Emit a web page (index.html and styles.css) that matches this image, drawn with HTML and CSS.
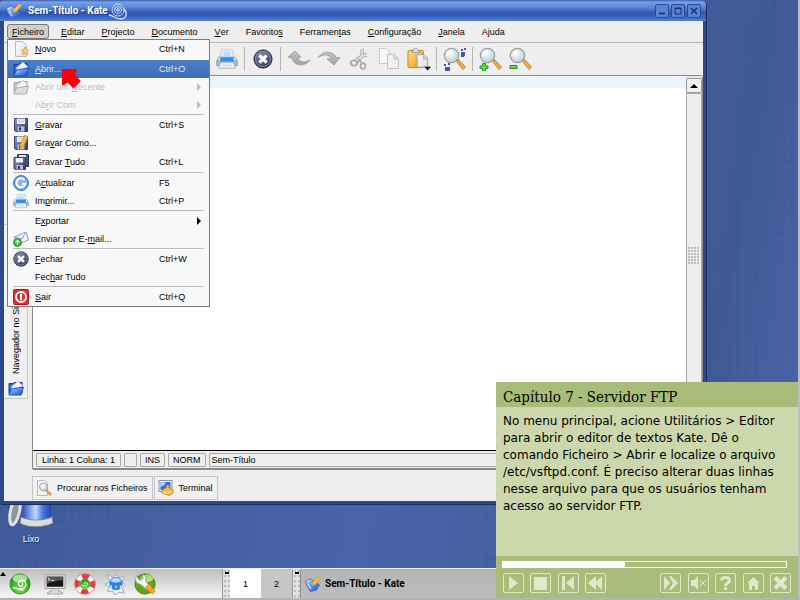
FILE: index.html
```html
<!DOCTYPE html>
<html lang="pt">
<head>
<meta charset="utf-8">
<title>Sem-Título - Kate</title>
<link rel="stylesheet" href="styles.css">
</head>
<body>
<svg class="defs" aria-hidden="true">
  <defs>
    <linearGradient id="g-blue" x1="0" y1="0" x2="1" y2="1"><stop offset="0" stop-color="#cfe4ff"/><stop offset=".5" stop-color="#5b93ee"/><stop offset="1" stop-color="#1546c8"/></linearGradient>
    <linearGradient id="g-paper" x1="0" y1="0" x2="1" y2="1"><stop offset="0" stop-color="#fff"/><stop offset="1" stop-color="#d9dce8"/></linearGradient>
    <linearGradient id="g-grey" x1="0" y1="0" x2="0" y2="1"><stop offset="0" stop-color="#c4c4c4"/><stop offset="1" stop-color="#a2a2a2"/></linearGradient>
    <linearGradient id="g-gold" x1="0" y1="0" x2="1" y2="1"><stop offset="0" stop-color="#ffe08a"/><stop offset="1" stop-color="#e2960d"/></linearGradient>
    <linearGradient id="g-disk" x1="0" y1="0" x2="1" y2="1"><stop offset="0" stop-color="#9aa0c4"/><stop offset="1" stop-color="#2a2e5e"/></linearGradient>
    <linearGradient id="g-bin" x1="0" y1="0" x2="1" y2="0"><stop offset="0" stop-color="#2b57cf"/><stop offset=".45" stop-color="#c6d6fa"/><stop offset=".7" stop-color="#4f79e0"/><stop offset="1" stop-color="#1f46b8"/></linearGradient>
    <radialGradient id="g-lens" cx=".4" cy=".35" r=".7"><stop offset="0" stop-color="#fff"/><stop offset="1" stop-color="#b9c9c9"/></radialGradient>
    <radialGradient id="g-navy" cx=".4" cy=".3" r=".8"><stop offset="0" stop-color="#8588ad"/><stop offset="1" stop-color="#262a52"/></radialGradient>
    <radialGradient id="g-green" cx=".5" cy=".75" r=".7"><stop offset="0" stop-color="#7be04c"/><stop offset="1" stop-color="#18951a"/></radialGradient>

    <symbol id="i-kate" viewBox="0 0 16 16"><path d="M.5 5.500 5 2.500 14.500 9l-3 5-6 1.500-4-6z" fill="url(#g-blue)" stroke="#3b61c0" stroke-width=".8"/><path d="m2 6 2-1.500M3 8l3 5" stroke="#e6efff"/><path d="M13.500.5 8 6 7 9.500l3.500-1 5-6z" fill="#f6c44e" stroke="#d28a1d" stroke-width=".7"/></symbol>
    <symbol id="i-new" viewBox="0 0 16 16"><path d="M2.500 .5h7l4 4v11h-11z" fill="url(#g-paper)" stroke="#b4b7c4"/><path d="m12 6 1 2.500 2.500.5-1.500 2 .500 2.500-2.500-1-2.500 1 .5-2.500-1.500-2 2.500-.5z" fill="#ffd06a" stroke="#e59a2c" stroke-width=".8"/></symbol>
    <symbol id="i-open" viewBox="0 0 16 16"><path d="M1 3.500h4l1-1h8v11H1z" fill="#2c62dc" stroke="#163f9f"/><path d="m3 7 7-6 5 5-10 5z" fill="#f1f4ff" stroke="#9fb1dd" stroke-width=".7"/><path d="M.8 15 3.500 9l12-2-2.500 8z" fill="url(#g-blue)" stroke="#174bc4" stroke-width=".9"/></symbol>
    <symbol id="i-open-off" viewBox="0 0 16 16"><path d="M1 3.500h4l1-1h8v11H1z" fill="#c0c0c0" stroke="#aaa"/><path d="m3 7 7-6 5 5-10 5z" fill="#f1f1f1" stroke="#bbb" stroke-width=".7"/><path d="M.8 15 3.500 9l12-2-2.500 8z" fill="#ddd" stroke="#a8a8a8" stroke-width=".9"/></symbol>
    <symbol id="i-save" viewBox="0 0 16 16"><path d="M1.500 1.500h13v13h-12l-1-1z" fill="url(#g-disk)" stroke="#3c406e"/><path d="M4 1.500h8v5.500H4z" fill="#f1f3fb"/><path d="M5 3h6M5 5h6" stroke="#c2c7da"/><path d="M4.500 9.500h7v5h-7z" fill="#b9bfd8"/><path d="M6 10.500h2v3H6z" fill="#30355f"/></symbol>
    <symbol id="i-saveas" viewBox="0 0 16 16"><use href="#i-save"/><path d="m12 0 3 2-5 10-3 2 0-4z" fill="#f6b93b" stroke="#cf861b" stroke-width=".7"/></symbol>
    <symbol id="i-saveall" viewBox="0 0 16 16"><path d="M4.500.5h11v12h-11z" fill="#4b5083" stroke="#30345f"/><path d="M6 1h7v3H6z" fill="#dde1f1"/><path d="M1 3.500h11.500v12H2l-1-1z" fill="url(#g-disk)" stroke="#3c406e"/><path d="M3 4h7v4.500H3z" fill="#f1f3fb"/><path d="M3.500 11h6.500v4.500H3.500z" fill="#b9bfd8"/><path d="M5 12h2v3H5z" fill="#30355f"/></symbol>
    <symbol id="i-reload" viewBox="0 0 16 16"><circle cx="8" cy="8" r="7.500" fill="#5f95e8" stroke="#3e74d1"/><circle cx="8" cy="8" r="6.200" fill="#8cb7f5"/><path d="M11.500 5A4.500 4.500 0 1 0 12.300 9H9" fill="none" stroke="#fff" stroke-width="2"/></symbol>
    <symbol id="i-print" viewBox="0 0 24 22"><path d="M6 1h12l1 9H5z" fill="#eaf4ff" stroke="#b7c8dc"/><path d="M8 3h8v5H8z" fill="#b9ddfb"/><path d="M3 9h18l2 4v5H1v-5z" fill="#e7e9f1" stroke="#9498aa"/><path d="M5 9h14l1 5H4z" fill="#2c92ec"/><path d="M1 13h4v5H1zm18 0h4v5h-4z" fill="#b4b7c7" stroke="#8a8da0" stroke-width=".6"/><path d="M5 15h14l2 6H3z" fill="#f8faff" stroke="#a8acbd"/><path d="M7 17h10l1 2H6z" fill="#bcdcf8"/></symbol>
    <symbol id="i-close" viewBox="0 0 22 22"><circle cx="11" cy="11" r="10" fill="url(#g-navy)" stroke="#202448"/><circle cx="11" cy="11" r="8.300" fill="none" stroke="#9093b4"/><path d="m7 7 8 8m0-8-8 8" stroke="#fff" stroke-width="3.600"/></symbol>
    <symbol id="i-mail" viewBox="0 0 16 16"><path d="m1 6 12-5 2.500 8L5 13z" fill="#eef0fa" stroke="#9aa0bd"/><path d="m1 6 8 2 4-7" fill="none" stroke="#9aa0bd"/><circle cx="4.500" cy="11.500" r="4" fill="#35b33a" stroke="#1d8624" stroke-width=".7"/><path d="M4.500 14v-4.500M2.500 11.300l2-2 2 2" fill="none" stroke="#fff" stroke-width="1.200"/></symbol>
    <symbol id="i-quit" viewBox="0 0 16 16"><rect x=".5" y=".5" width="15" height="15" rx="1" fill="#d93338" stroke="#b5161c"/><circle cx="8" cy="8" r="5" fill="none" stroke="#fff" stroke-width="1.800"/><path d="M8 5v6" stroke="#fff" stroke-width="2"/></symbol>
    <symbol id="i-undo" viewBox="0 0 24 22"><path d="m1 9 7-6 6 6-3 .500c.5 4 5 6 12 2.500-4 6.500-16 7-18-2z" fill="url(#g-grey)" stroke="#989898" stroke-width=".8"/></symbol>
    <symbol id="i-redo" viewBox="0 0 24 22"><path d="M1 9.500C6 2 17 3 19 9.500h4L17 17l-7-6 4-.500c-1-4-7-5-13-1z" fill="url(#g-grey)" stroke="#989898" stroke-width=".8"/></symbol>
    <symbol id="i-cut" viewBox="0 0 24 24"><path d="M15 2c1 4 0 8-5 13M20 8c-4 0-7 2-11 5" stroke="#a4a4a4" stroke-width="3.400" fill="none"/><path d="M15 2c1 4 0 8-5 13M20 8c-4 0-7 2-11 5" stroke="#e1e1e1" stroke-width="1.800" fill="none"/><path d="m11 12 5 5" stroke="#b0b0b0" stroke-width="2"/><ellipse cx="7" cy="16" rx="3.200" ry="2.600" fill="none" stroke="#ababab" stroke-width="1.800"/><ellipse cx="16" cy="19" rx="2.400" ry="2.800" fill="none" stroke="#ababab" stroke-width="1.800"/></symbol>
    <symbol id="i-copy" viewBox="0 0 24 24"><path d="M2.500 1.500h7l3 3v12h-10z" fill="#f7f7f7" stroke="#cacaca"/><path d="M10.500 7.500h7l4 4v10h-11z" fill="#f1f1f1" stroke="#c2c2c2"/><path d="M17 8v4h4" fill="#ddd" stroke="#c2c2c2"/></symbol>
    <symbol id="i-paste" viewBox="0 0 25 24"><rect x="1" y="3" width="16" height="18" rx="1.500" fill="url(#g-gold)" stroke="#c98512"/><path d="M5 5V3h2c0-3 4-3 4 0h2v2z" fill="#e7e7ee" stroke="#85858f" stroke-width=".8"/><path d="M10.500 7.500h7l4 4v9h-11z" fill="url(#g-paper)" stroke="#9a9db2"/><path d="M17 8v4h4" fill="#ccd" stroke="#9a9db2" stroke-width=".7"/><path d="M18 20h7l-3.500 4z" fill="#000"/></symbol>
    <symbol id="i-lens" viewBox="0 0 24 24"><path d="m13.500 14.500 2-2 7 7.500-2.500 2.500z" fill="#f2a844" stroke="#b87520" stroke-width=".8"/><circle cx="8.500" cy="8.500" r="7.200" fill="url(#g-lens)" stroke="#9aa0a0" stroke-width="1.200"/><path d="M4.500 9a4.500 4.500 0 0 1 4-5" fill="none" stroke="#fff" stroke-width="1.500"/></symbol>
    <symbol id="i-find" viewBox="0 0 24 24"><use href="#i-lens"/><path d="M1 17h2v2H1zm4-1h2v2H5zm-3 4h5v4H2zm16-15h4v3l-1 2h-3zm0-3h2v2h-2zm3-1h2v2h-2z" fill="#3c5a9c"/></symbol>
    <symbol id="i-zoomin" viewBox="0 0 24 24"><use href="#i-lens"/><path d="M3.500 16.500h3v2.500h2.500v2.500H6.500V24h-3v-2.500H1V19h2.500z" fill="#64e23c" stroke="#188a12" stroke-width=".9"/></symbol>
    <symbol id="i-zoomout" viewBox="0 0 24 24"><use href="#i-lens"/><path d="M1 18.500h7v3H1z" fill="#64e23c" stroke="#188a12" stroke-width=".9"/></symbol>
    <symbol id="i-findfile" viewBox="0 0 16 16"><path d="M1.500.5h7l3 3v12h-10z" fill="#f4f4f8" stroke="#b5b8c6"/><path d="m10 10 5 5" stroke="#dd9a3c" stroke-width="2.500"/><circle cx="7.500" cy="7" r="4" fill="url(#g-lens)" stroke="#a4a8ac"/></symbol>
    <symbol id="i-term" viewBox="0 0 16 16"><rect x="1" y=".5" width="13" height="11" fill="#e8edf8" stroke="#8a93b0"/><path d="M2.500 2h10v8h-10z" fill="#2d6ede"/><path d="M2.500 7c4-1 5-3 5-5h-5z" fill="#a9cbff"/><path d="m4 10 4-2 1-3h2v3l4 2v3l-4 2.500L4 13z" fill="#f6bb48" stroke="#c8801b" stroke-width=".8"/><path d="m5 12 4 1.500 5-2" fill="none" stroke="#fff0c0"/></symbol>
  </defs>
</svg>

<main class="desktop">
  <a class="trash" href="#lixo">
    <svg viewBox="0 0 46 32" aria-hidden="true"><path d="M15 0h28v22c-6 4-22 4-28 0z" fill="url(#g-bin)"/><path d="M13 20c8 4 23 4 31 0l1 6c-9 5-26 5-33 0z" fill="#d9dcdc" stroke="#6f7a86" stroke-width=".8"/><ellipse cx="7" cy="14" rx="4.500" ry="14" transform="rotate(12 7 14)" fill="#8b96a0" stroke="#dfe2de" stroke-width="3"/></svg>
    <span>Lixo</span>
  </a>

  <section class="window" aria-label="Sem-Título - Kate">
    <header class="titlebar">
      <svg class="ic16" aria-hidden="true"><use href="#i-kate"/></svg>
      <h1>Sem-Título - Kate</h1>
      <svg class="swirl" viewBox="0 0 22 20" aria-hidden="true"><circle cx="10" cy="9" r="6" fill="none" stroke="#c9d7f2"/><circle cx="10" cy="9" r="3.500" fill="none" stroke="#c9d7f2"/><circle cx="10" cy="9" r="1.300" fill="none" stroke="#e4ecfa"/><path d="M1 14c4 0 6 4 12 4 5 0 7-5 3-10" fill="none" stroke="#dce6f8" stroke-width="1.300"/></svg>
      <div class="winbtns">
        <button type="button" aria-label="Minimizar"><svg viewBox="0 0 12 12"><path d="M3 8.500h6" stroke="#142c66" stroke-width="1.500"/></svg></button>
        <button type="button" aria-label="Maximizar"><svg viewBox="0 0 12 12"><path d="M3 3.500h6v5.500H3zM3 3h6" fill="none" stroke="#142c66"/></svg></button>
        <button type="button" aria-label="Fechar janela"><svg viewBox="0 0 12 12"><path d="m3 3 6 6m0-6L3 9" stroke="#142c66" stroke-width="1.200"/></svg></button>
      </div>
    </header>

    <nav class="menubar" aria-label="Menu">
      <div class="menu">
        <button type="button" class="open" aria-expanded="true"><u>F</u>icheiro</button>
        <div class="popup">
          <button type="button" class="tall first"><svg><use href="#i-new"/></svg><span><u>N</u>ovo</span><kbd>Ctrl+N</kbd></button>
          <button type="button" class="active"><svg><use href="#i-open"/></svg><span><u>A</u>brir...</span><kbd>Ctrl+O</kbd></button>
          <button type="button" disabled><svg><use href="#i-open-off"/></svg><span>Abrir um <u>R</u>ecente</span><i class="more"></i></button>
          <button type="button" disabled><svg></svg><span>Ab<u>r</u>ir Com</span><i class="more"></i></button>
          <hr>
          <button type="button"><svg><use href="#i-save"/></svg><span><u>G</u>ravar</span><kbd>Ctrl+S</kbd></button>
          <button type="button"><svg><use href="#i-saveas"/></svg><span>Gra<u>v</u>ar Como...</span></button>
          <button type="button" class="tall"><svg><use href="#i-saveall"/></svg><span>Gravar <u>T</u>udo</span><kbd>Ctrl+L</kbd></button>
          <hr>
          <button type="button"><svg><use href="#i-reload"/></svg><span>A<u>c</u>tualizar</span><kbd>F5</kbd></button>
          <button type="button"><svg><use href="#i-print"/></svg><span>Im<u>p</u>rimir...</span><kbd>Ctrl+P</kbd></button>
          <hr>
          <button type="button"><svg></svg><span>E<u>x</u>portar</span><i class="more"></i></button>
          <button type="button"><svg><use href="#i-mail"/></svg><span>Enviar por E-<u>m</u>ail...</span></button>
          <hr>
          <button type="button"><svg><use href="#i-close"/></svg><span><u>F</u>echar</span><kbd>Ctrl+W</kbd></button>
          <button type="button"><svg></svg><span>Fec<u>h</u>ar Tudo</span></button>
          <hr>
          <button type="button"><svg><use href="#i-quit"/></svg><span><u>S</u>air</span><kbd>Ctrl+Q</kbd></button>
        </div>
      </div>
      <button type="button"><u>E</u>ditar</button>
      <button type="button"><u>P</u>rojecto</button>
      <button type="button"><u>D</u>ocumento</button>
      <button type="button"><u>V</u>er</button>
      <button type="button">Favorito<u>s</u></button>
      <button type="button">Ferramen<u>t</u>as</button>
      <button type="button"><u>C</u>onfiguração</button>
      <button type="button"><u>J</u>anela</button>
      <button type="button">Ajuda</button>
    </nav>

    <div class="toolbar" role="toolbar" aria-label="Ferramentas">
      <button type="button" aria-label="Imprimir"><svg class="mid"><use href="#i-print"/></svg></button>
      <i class="sep"></i>
      <button type="button" aria-label="Fechar"><svg class="small"><use href="#i-close"/></svg></button>
      <i class="sep"></i>
      <button type="button" aria-label="Desfazer" disabled><svg><use href="#i-undo"/></svg></button>
      <button type="button" aria-label="Refazer" disabled><svg><use href="#i-redo"/></svg></button>
      <button type="button" aria-label="Cortar" disabled><svg><use href="#i-cut"/></svg></button>
      <button type="button" aria-label="Copiar" disabled><svg><use href="#i-copy"/></svg></button>
      <button type="button" aria-label="Colar"><svg><use href="#i-paste"/></svg></button>
      <i class="sep"></i>
      <button type="button" aria-label="Procurar"><svg><use href="#i-find"/></svg></button>
      <i class="sep"></i>
      <button type="button" aria-label="Ampliar"><svg><use href="#i-zoomin"/></svg></button>
      <button type="button" aria-label="Reduzir"><svg><use href="#i-zoomout"/></svg></button>
    </div>

    <div class="work">
      <aside class="side">
        <button type="button" class="vtab"><span>Navegador no Sistema de Ficheiros</span><svg class="ic16"><use href="#i-open"/></svg></button>
      </aside>
      <div class="editor">
        <div class="text">
          <textarea aria-label="Texto do documento" spellcheck="false"></textarea>
          <div class="scroll">
            <button type="button" aria-label="Subir"><svg viewBox="0 0 8 4"><path d="M0 4h8L4 0z"/></svg></button>
            <div class="thumb"><i></i></div>
          </div>
        </div>
        <footer class="status">
          <span class="pos">Linha: 1 Coluna: 1</span><span class="blank"></span><span>INS</span><span>NORM</span><span class="file">Sem-Título</span>
        </footer>
      </div>
    </div>

    <div class="bottomtabs">
      <button type="button"><svg class="ic16"><use href="#i-findfile"/></svg>Procurar nos Ficheiros</button>
      <button type="button"><svg class="ic16"><use href="#i-term"/></svg>Terminal</button>
    </div>
  </section>

  <svg class="pointer" viewBox="0 0 20 20" aria-hidden="true"><path d="M1 1h14.500v2.500L14 6v1l5.500 5.500v1L13 20h-1l-5.500-5.500L3 17H1z" fill="#fb0007"/></svg>

  <nav class="taskbar" aria-label="Painel">
    <i class="tip"></i>
    <div class="launch">
      <button type="button" aria-label="Menu principal"><svg viewBox="0 0 24 24"><circle cx="12" cy="12" r="11" fill="url(#g-green)" stroke="#128016" stroke-width=".8"/><ellipse cx="12" cy="6" rx="8" ry="4.500" fill="#c7f3b8" opacity=".8"/><path d="M4 16c5 1 9 2 13 0 3-3 1-8-3-8s-5 5-2 6 4-2 2-3M8 17l8 2" fill="none" stroke="#fff" stroke-width="1.300"/></svg></button>
      <button type="button" aria-label="Terminal"><svg viewBox="0 0 24 24"><path d="M1 2h22v15H1z" fill="#e4e4e4" stroke="#9a9a9a"/><path d="M3 4h18v11H3z" fill="#151515"/><path d="M3 4h18v4C14 8 9 10 3 12z" fill="#555"/><path d="m4.500 5.500 2 1.500-2 1M8 8h3" fill="none" stroke="#fff"/><path d="M9 17h6l1 3 4 1v2H4v-2l4-1z" fill="#dadada" stroke="#888" stroke-width=".7"/></svg></button>
      <button type="button" aria-label="Ajuda"><svg viewBox="0 0 24 24"><circle cx="12" cy="12" r="8.500" fill="none" stroke="#f5f2f2" stroke-width="5.500"/><circle cx="12" cy="12" r="8.500" fill="none" stroke="#e33d3d" stroke-width="5.500" stroke-dasharray="7.400 5.950" stroke-dashoffset="3.500"/><circle cx="12" cy="12" r="11.300" fill="none" stroke="#c86a6a" stroke-width=".7"/><circle cx="12" cy="12" r="5.500" fill="url(#g-green)"/><path d="M8 13c4 2 7 1 7-1s-4-2-4 0" fill="none" stroke="#dff8d4"/></svg></button>
      <button type="button" aria-label="Navegador"><svg viewBox="0 0 24 24"><path d="m4 1 5 4 4-3 3 3 6-1-2 6 3 3-3 3 2 6-6-1-4 3-2-4-6 0 2-5-5-3 5-2z" fill="#eef3fa" stroke="#8fa0b8" stroke-width=".9"/><circle cx="13" cy="11.500" r="7.200" fill="#2c7de4"/><path d="M7 9c3-5 9-5 12 0-4 2-8 2-12 0z" fill="#b5dbff"/><path d="M8 17v-4m5 4v-3m5 3v-4" stroke="#bfe0ff" stroke-width="1.500"/></svg></button>
      <button type="button" aria-label="Configurar"><svg viewBox="0 0 24 24"><circle cx="12" cy="12" r="11" fill="#5aa71c" stroke="#3f8311"/><ellipse cx="14" cy="6" rx="7" ry="4" fill="#b5dd79"/><path d="M4 2 1 6l2 5 5 2 5 5 4-4-4-5V4L9 1l1 5-3 2-3-2z" fill="#f4f4f4" stroke="#8a8a8a" stroke-width=".8"/><path d="m12 16 5-4 6 8-3 3z" fill="#f9a72c" stroke="#cf7a12" stroke-width=".8"/></svg></button>
    </div>
    <div class="grip"></div>
    <button type="button" class="desk on">1</button>
    <button type="button" class="desk">2</button>
    <div class="grip"></div>
    <button type="button" class="task"><svg class="ic16"><use href="#i-kate"/></svg>Sem-Título - Kate</button>
  </nav>

  <article class="lesson">
    <h2>Capítulo 7 - Servidor FTP</h2>
    <p>No menu principal, acione Utilitários &gt; Editor para abrir o editor de textos Kate. Dê o comando Ficheiro &gt; Abrir e localize o arquivo /etc/vsftpd.conf. É preciso alterar duas linhas nesse arquivo para que os usuários tenham acesso ao servidor FTP.</p>
    <footer>
      <div class="progress"><div class="done" style="width:43%"></div></div>
      <div class="controls">
        <div class="group">
          <button type="button" aria-label="Reproduzir"><svg viewBox="0 0 19 18"><path d="M5 2v14l9-7z"/></svg></button>
          <button type="button" aria-label="Parar"><svg viewBox="0 0 19 18"><path d="M3 3h13v13H3z"/></svg></button>
          <button type="button" aria-label="Início"><svg viewBox="0 0 19 18"><path d="M3 2h3v14H3zM15 2v14L7 9z"/></svg></button>
          <button type="button" aria-label="Recuar"><svg viewBox="0 0 19 18"><path d="M10 2v14L2 9zM16 2v14L9 9z"/></svg></button>
        </div>
        <div class="group wide">
          <button type="button" aria-label="Avançar"><svg viewBox="0 0 19 18"><path d="m3 2 6 7-6 7zM8 2h2l7 7-7 7H8l4-7z"/></svg></button>
          <button type="button" aria-label="Sem som"><svg viewBox="0 0 19 18"><path d="M2 6h3l4-4v14l-4-4H2z"/><path d="m11 6 6 6m0-6-6 6" stroke="#dfe8cb"/></svg></button>
          <button type="button" aria-label="Ajuda da lição"><svg viewBox="0 0 19 18"><path d="M5.500 6.500c0-4 8-4 8 0 0 2.500-4 2.500-4 5.500" fill="none" stroke="#dfe8cb" stroke-width="3"/><path d="M8 13h3v3H8z"/></svg></button>
          <button type="button" aria-label="Página inicial"><svg viewBox="0 0 19 18"><path d="m9.500 3 6.500 6h-2v7h-3v-4H8v4H5V9H3z"/></svg></button>
          <button type="button" aria-label="Sair da lição"><svg viewBox="0 0 19 18"><path d="m4 3.500 11 11m0-11-11 11" stroke="#dfe8cb" stroke-width="4.500"/></svg></button>
        </div>
      </div>
    </footer>
  </article>
</main>
</body>
</html>
```
FILE: styles.css
```css
* { box-sizing: border-box; }

body {
  margin: 0;
  font: 9px/12px "Liberation Sans", sans-serif;
  color: #000;
}

button {
  margin: 0;
  padding: 0;
  border: 0;
  background: none;
  font: inherit;
  color: inherit;
  display: flex;
  align-items: center;
  white-space: nowrap;
}

svg { display: block; flex: none; }
u { text-underline-offset: 1px; }

.defs { position: absolute; width: 0; height: 0; }
.ic16 { width: 16px; height: 16px; }

.desktop {
  position: relative;
  min-height: 100vh;
  overflow: hidden;
  border-right: 2px solid #bdbdc1;
  border-bottom: 2px solid #b4b4b4;
  background:
    radial-gradient(circle, rgba(255, 255, 255, .02) 2px, transparent 3px) 0 0 / 9px 9px,
    linear-gradient(100deg, #3d5796 0%, #4863aa 50%, #3f5995 86%, #4b66aa 100%);
}

/* Desktop icon */
.trash {
  position: absolute;
  left: 8px;
  bottom: 53px;
  width: 46px;
  color: #fff;
  text-decoration: none;
  text-align: center;
  text-shadow: 1px 1px 1px #14224a;
}
.trash svg { width: 46px; height: 32px; overflow: visible; }
.trash span { display: block; margin-top: 4px; }

/* Window frame */
.window {
  position: absolute;
  inset: 0 92px 94px 0;
  display: flex;
  flex-direction: column;
  border: solid #2a4a8c;
  border-width: 0 3px 3px 4px;
  border-radius: 4px 5px 0 0;
  background: #eee;
  box-shadow: 1px 1px 0 #1b2c5c;
}
.titlebar {
  display: flex;
  align-items: center;
  height: 21px;
  margin: 0 -3px 0 -4px;
  padding: 0 5px 0 6px;
  border-radius: 4px 5px 0 0;
  background: linear-gradient(#3a5ea8 0, #77a0e8 2px, #5c88dc 7px, #2f56b0 13px, #3a66c4 17px, #5580d4 21px);
}
.titlebar h1 {
  margin: 0 0 0 6px;
  font: bold 10px/14px Roboto, sans-serif;
  color: #fff;
  text-shadow: 1px 1px 0 #1e3a80;
}
.swirl { width: 22px; height: 20px; }
.winbtns { display: flex; gap: 2px; margin-left: auto; }
.winbtns button {
  width: 14px;
  height: 14px;
  border: 1px solid #2a4a96;
  border-radius: 2px;
  background: #5a82d2;
}
.winbtns svg { width: 12px; height: 12px; }

/* Menu bar */
.menubar {
  display: flex;
  align-items: center;
  gap: 7px;
  height: 22px;
  padding-left: 3px;
  border-bottom: 1px solid #b4b4b4;
}
.menubar > button, .menu > button {
  height: 15px;
  padding: 0 4px;
  border: 1px solid transparent;
  border-radius: 3px;
}
.menu { position: relative; }
.menu > .open { background: #d0d0d0; border-color: #777; }

.popup {
  position: absolute;
  z-index: 3;
  left: 0;
  top: 15px;
  width: 203px;
  border: 1px solid #7c7c7c;
  background: #f8f8f8;
}
.popup button {
  width: 100%;
  height: 18px;
  padding: 0 6px 0 5px;
}
.popup .tall { height: 20px; }
.popup .first { padding-bottom: 2px; }
.popup svg { width: 16px; height: 16px; margin-right: 6px; }
.popup span { flex: 1; text-align: left; }
.popup kbd { width: 44px; font: inherit; text-align: left; }
.popup .active { background: linear-gradient(#4a7fc8, #3c6cb8); color: #e4ecf8; }
.popup button:disabled { color: #bcbcbc; }
.popup hr {
  height: 2px;
  margin: 0 5px;
  border: 0;
  border-top: 1px solid #bdbdbd;
}
.more {
  border: 4px solid transparent;
  border-left-color: currentColor;
  border-right: 0;
  margin-right: 2px;
}

/* Toolbar */
.toolbar {
  display: flex;
  align-items: center;
  height: 32px;
  padding: 0 0 1px 208px;
}
.toolbar button { width: 30px; height: 30px; justify-content: center; }
.toolbar svg { width: 24px; height: 24px; }
.toolbar .mid { width: 22px; height: 22px; }
.toolbar .small { width: 20px; height: 20px; }
.sep { width: 1px; height: 24px; margin: 0 3px 0 2px; background: #b5b5b5; }

/* Side tabs and editor */
.work { flex: 1; display: flex; min-height: 0; }
.side { width: 28px; padding-top: 149px; }
.vtab {
  flex-direction: column;
  justify-content: flex-end;
  gap: 6px;
  width: 24px;
  height: 175px;
  padding-bottom: 2px;
  border: 1px solid #c4c6cf;
  border-left: 0;
  background: #f1f1f1;
}
.vtab span { writing-mode: vertical-rl; transform: rotate(180deg); }

.editor {
  flex: 1;
  display: flex;
  flex-direction: column;
  border: 1px solid #888;
  border-bottom-width: 2px;
  border-radius: 0 3px 3px 2px;
}
.text { flex: 1; display: flex; min-height: 0; border-bottom: 1px solid #000; }
textarea {
  flex: 1;
  padding: 0;
  border: 0;
  outline: 0;
  resize: none;
  font: 9px/12px "Liberation Mono", monospace;
  background: linear-gradient(#ecf4fe 12px, #fff 12px);
}
.scroll { display: flex; flex-direction: column; width: 16px; padding-top: 2px; background: #e4e4e4; }
.scroll button {
  justify-content: center;
  height: 15px;
  border: 1px solid #999;
  border-radius: 2px;
  background: #f2f2f2;
}
.scroll svg { width: 8px; height: 4px; }
.thumb {
  flex: 1;
  display: flex;
  align-items: center;
  justify-content: center;
  padding-bottom: 32px;
  border: 1px solid #aaa;
  background: #efefef;
}
.thumb i {
  width: 12px;
  height: 18px;
  background: radial-gradient(circle at 1px 1px, #bbb 1px, transparent 1px) 0 0 / 3px 3px;
}

.status {
  display: flex;
  gap: 3px;
  height: 17px;
  padding: 2px 3px 1px;
}
.status span { padding: 0 4px; border: 1px solid #a9a9a9; border-radius: 1px; line-height: 12px; }
.status .pos { padding: 0 5px; }
.status .blank { width: 13px; }
.status .file { flex: 1; padding: 0 2px; }

.bottomtabs { display: flex; gap: 1px; padding: 6px 0 1px 28px; }
.bottomtabs button {
  gap: 5px;
  height: 24px;
  padding: 0 4px 0 3px;
  border: 1px solid #c4c4c4;
  background: #f1f1f1;
}

.pointer {
  position: absolute;
  z-index: 4;
  left: 61px;
  top: 68px;
  width: 20px;
  height: 20px;
}

/* Task bar */
.taskbar {
  position: absolute;
  inset: auto 0 0 0;
  display: flex;
  height: 30px;
  border-top: 1px solid #f2f2f2;
  background: linear-gradient(#bdbdbd, #f2f2f2 90%);
}
.tip {
  width: 6px;
  height: 0;
  margin-top: 3px;
  border: 3px solid transparent;
  border-top: 0;
  border-bottom: 4px solid #000;
}
.launch { flex: none; display: flex; align-items: center; gap: 8px; width: 216px; padding-left: 3px; }
.launch svg { width: 22px; height: 22px; }
.launch button:first-child { margin-right: 5px; }
.grip {
  flex: none;
  width: 8px;
  border-left: 1px solid #999;
  background:
    linear-gradient(#000, #000) 2px 3px / 4px 2px no-repeat,
    radial-gradient(circle at 2px 2px, #bbb 1px, transparent 1px) 0 0 / 4px 5px,
    #e2e2e2;
}
.desk { flex: none; width: 31px; justify-content: center; background: #c6c6c6; }
.desk.on { background: #fff; }
.task {
  flex: 1;
  gap: 4px;
  padding-left: 4px;
  border-left: 1px solid #888;
  border-radius: 3px 0 0 0;
  background: linear-gradient(#b4b4b4, #bebebe);
  font: bold 10px/14px Roboto, sans-serif;
}

/* Lesson panel */
.lesson {
  position: absolute;
  z-index: 5;
  right: 0;
  bottom: 0;
  display: flex;
  flex-direction: column;
  width: 302px;
  min-height: 216px;
  background: #ccd8ac;
}
.lesson h2 {
  margin: 0;
  padding: 5px 7px 0;
  height: 25px;
  background: #a9bd7a;
  font: 15px/20px "DejaVu Serif Condensed", "DejaVu Serif", serif;
}
.lesson p {
  flex: 1;
  margin: 0;
  padding: 6px 7px;
  font: 12px/17px "DejaVu Sans", sans-serif;
}
.lesson footer { padding: 5px 7px; background: #a9bd7a; }
.progress { height: 7px; margin: 0 4px 0 -1px; border: 1px solid #fff; }
.done { height: 100%; background: #fff; }
.controls { display: flex; justify-content: space-between; margin-top: 5px; }
.group { display: flex; justify-content: space-between; width: 103px; }
.group.wide { width: 131px; }
.controls button { width: 21px; height: 20px; border: 1px solid #dfe8cb; border-radius: 2px; }
.controls svg { width: 19px; height: 18px; fill: #dfe8cb; }
```
